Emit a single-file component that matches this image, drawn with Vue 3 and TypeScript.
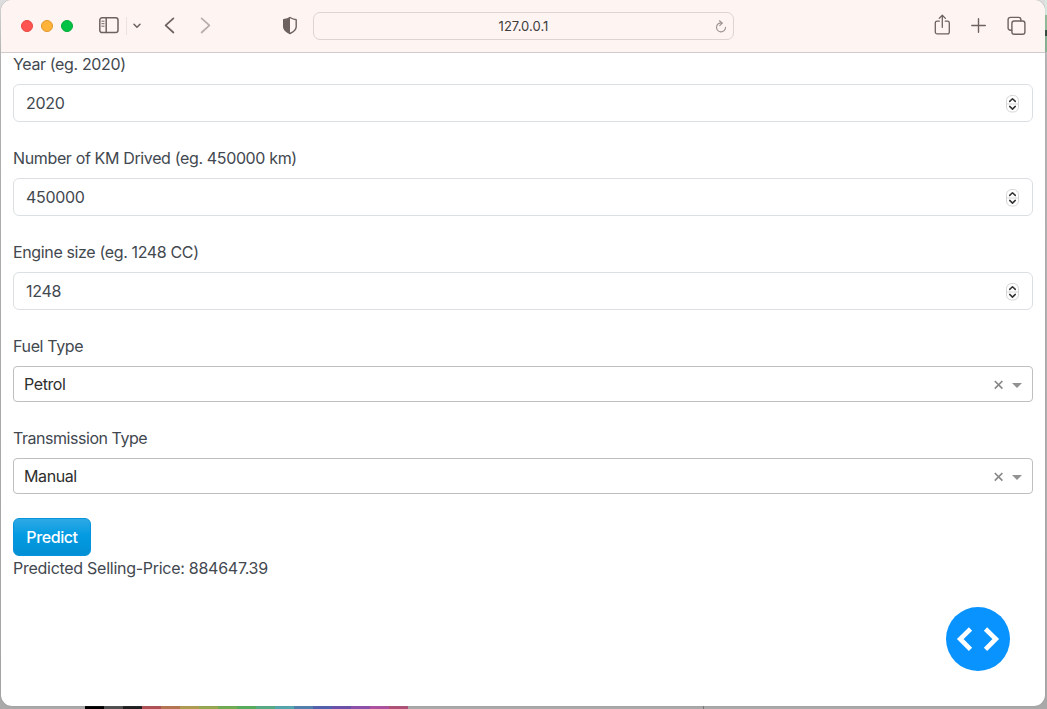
<script setup lang="ts">
import { ref } from 'vue'

interface Field { id: string; label: string; value: string }

const numberFields = ref<Field[]>([
  { id: 'year', label: 'Year (eg. 2020)', value: '2020' },
  { id: 'km', label: 'Number of KM Drived (eg. 450000 km)', value: '450000' },
  { id: 'engine', label: 'Engine size (eg. 1248 CC)', value: '1248' },
])
const selectFields = ref<Field[]>([
  { id: 'fuel', label: 'Fuel Type', value: 'Petrol' },
  { id: 'transmission', label: 'Transmission Type', value: 'Manual' },
])
const price = ref('884647.39')
const swatches: string[] = [
  '#000000', '#505050', '#202020', '#b05055', '#b57550', '#b09c50', '#96a850', '#6fac52', '#55ac5a',
  '#55ac84', '#52a8ae', '#4f80ae', '#5060ac', '#6a50aa', '#8c50aa', '#ae50a0', '#b05078',
]
</script>

<template>
  <div class="desktop">
    <div class="window">
      <header class="toolbar">
        <div class="lights"><i class="red"></i><i class="amber"></i><i class="green"></i></div>
        <svg class="sidebar" width="20" height="17" viewBox="0 0 20 17">
          <rect x=".8" y=".8" width="18.2" height="14.8" rx="2.3" />
          <path d="M7.2 1v14.6" />
          <path class="thin" d="M2.8 4.2h2.3M2.8 6.7h2.3M2.8 9.2h2.3" />
        </svg>
        <span class="divider"></span>
        <svg class="chev" width="8" height="6" viewBox="0 0 8 6"><path d="M1 1.2l3 3 3-3" /></svg>
        <svg class="back" width="11" height="17" viewBox="0 0 11 17"><path d="M9.4 1.3L1.6 8.4l7.8 7.1" /></svg>
        <svg class="forward" width="11" height="17" viewBox="0 0 11 17"><path d="M1.6 1.3l7.8 7.1-7.8 7.1" /></svg>
        <svg class="shield" width="16" height="19" viewBox="0 0 16 19">
          <path d="M8 1.5C6.3 2.8 4 3.3 1.7 3.7v7.1c0 3.2 3.2 5.2 6.3 6.7 3.1-1.5 6.2-3.5 6.2-6.7V3.7C12 3.3 9.7 2.8 8 1.5z" />
          <path class="fill" d="M8 1.5C6.3 2.8 4 3.3 1.7 3.7v7.1c0 3.2 3.2 5.2 6.3 6.7z" />
        </svg>
        <div class="address">
          <span>127.0.0.1</span>
          <svg width="12" height="13" viewBox="0 0 12 13"><path d="M6.7 2.9A4.5 4.5 0 1 0 10.5 7.4M4.4 .8l3 2.3-2.7 2.5" /></svg>
        </div>
        <svg class="share" width="17" height="22" viewBox="0 0 17 22">
          <path d="M5.3 7.2H3.2A1.9 1.9 0 0 0 1.3 9.1v8.9a1.9 1.9 0 0 0 1.9 1.9h10.2a1.9 1.9 0 0 0 1.9-1.9V9.1a1.9 1.9 0 0 0-1.9-1.9h-2.1M8.3 13.3V1.5M5.2 4.4l3.1-3.1 3.1 3.1" />
        </svg>
        <svg class="plus" width="15" height="15" viewBox="0 0 15 15"><path d="M7.5 .8v13.5M.8 7.5h13.5" /></svg>
        <svg class="tabs" width="19" height="20" viewBox="0 0 19 20">
          <path d="M4.7 14.2H3.4A2.3 2.3 0 0 1 1.1 11.9V3.7A2.3 2.3 0 0 1 3.4 1.4h8.2a2.3 2.3 0 0 1 2.3 2.3v1.2" />
          <rect x="4.9" y="5" width="13" height="13.3" rx="2.3" />
        </svg>
      </header>

      <main class="page">
        <div v-for="f in numberFields" :key="f.id" class="field">
          <label :class="f.id">{{ f.label }}</label>
          <div class="number">
            <span>{{ f.value }}</span>
            <svg class="stepper" width="15" height="20" viewBox="0 0 15 20">
              <rect x="1.5" y="2.5" width="12" height="16.500" rx="5" />
              <path class="mid" d="M2 11h11" />
              <path class="arrow" d="M4.700 8.400l2.800-2.700 2.800 2.700M4.700 13.400l2.800 2.700 2.800-2.700" />
            </svg>
          </div>
        </div>
        <div v-for="f in selectFields" :key="f.id" class="field">
          <label :class="f.id">{{ f.label }}</label>
          <div class="select">
            <span>{{ f.value }}</span>
            <svg class="clear" width="10" height="10" viewBox="0 0 10 10"><path d="M.8 1l7.600 7.600M8.400 1L.8 8.600" /></svg>
            <svg class="caret" width="10" height="5" viewBox="0 0 10 5"><path d="M0 0h10L5 5z" /></svg>
          </div>
        </div>
        <button class="predict" type="button">Predict</button>
        <div class="result">Predicted Selling-Price: {{ price }}</div>
      </main>

      <div class="debug">
        <svg width="64" height="64" viewBox="0 0 64 64"><path d="M24.500 22L14.200 32l10.300 10.300M39.500 22l10.300 10-10.300 10.300" /></svg>
      </div>
    </div>
    <div class="strip"><i v-for="c in swatches" :key="c" :style="{ background: c }"></i><b></b></div>
    <div class="behind"></div>
  </div>
</template>

<style>
body { overflow: hidden; }
</style>

<style scoped>
* { box-sizing: border-box; }
.desktop {
  position: relative; width: 1047px; height: 709px; overflow: hidden;
  background: linear-gradient(#dedede 0, #b5b5b5 60px, #a9a9a9 100%);
  font-family: Inter, "Liberation Sans", sans-serif; font-size: 16px; line-height: 24px; color: #42484f;
}
.window {
  position: relative; z-index: 1; width: 1044px; height: 706px; margin-left: 1px;
  border-radius: 11px; background: #fff; overflow: hidden;
  box-shadow: 0 0 1px #777;
}
.toolbar {
  display: flex; align-items: center; height: 53px; padding: 0 0 1px 20px;
  background: #fef4f1; border-bottom: 1px solid #cfcccb;
}
svg { display: block; flex: none; fill: none; stroke: #6e6260; stroke-width: 1.5; stroke-linecap: round; stroke-linejoin: round; }
.lights { display: flex; gap: 8px; }
.lights i { width: 12px; height: 12px; border-radius: 50%; border: 1px solid; }
.lights .red { background: #ff5450; border-color: #e8453f; }
.lights .amber { background: #ffb339; border-color: #df982c; }
.lights .green { background: #00c244; border-color: #00ad38; }
.sidebar { margin-left: 26px; }
.thin { stroke-width: 1; }
.divider { width: 1px; height: 18px; margin-left: 7px; background: #ece2df; }
.chev { margin-left: 6px; }
.back { margin-left: 23px; stroke-width: 1.7; }
.forward { margin-left: 25px; stroke: #b7adab; stroke-width: 1.7; }
.shield { margin-left: 71px; stroke-width: 1.4; }
.shield .fill { fill: #6e6260; stroke: none; }
.address {
  display: flex; flex: none; align-items: center; width: 421px; height: 28px; margin-left: 15px; padding-right: 6px;
  border: 1px solid #dcd5d2; border-radius: 7px; color: #3d3d3d; font-size: 13px;
}
.address span { flex: 1; padding-left: 18px; text-align: center; letter-spacing: 0.05px; }
.address svg { stroke: #9a918f; stroke-width: 1.1; margin-top: 1px; }
.share { margin-left: 200px; stroke-width: 1.3; margin-top: -2px; }
.plus { margin-left: 20px; stroke-width: 1.4; }
.tabs { margin-left: 21px; stroke-width: 1.4; }
.page { margin-top: -1px; padding: 0 12px; }
.field { margin-bottom: 24px; }
.field label { display: block; height: 24px; margin-bottom: 8px; letter-spacing: -0.36px; }
.field .transmission { letter-spacing: -0.46px; }
.number, .select { display: flex; align-items: center; background: #fff; }
.number { height: 38px; padding: 0 12px; border: 1px solid #dbdfe2; border-radius: 6px; }
.number span, .select span { flex: 1; }
.number span { letter-spacing: -0.3px; }
.stepper rect { fill: #fff; stroke: #d5d5d5; stroke-width: 1; }
.stepper .mid { stroke: #d8d8d8; stroke-width: 1; }
.stepper .arrow { stroke: #333; stroke-width: 1.5; }
.select { height: 36px; padding: 0 10px; border: 1px solid #bfbfbf; border-radius: 4px; color: #2e2e2e; letter-spacing: -0.4px; }
.clear { stroke: #888; stroke-width: 1.7; stroke-linecap: butt; margin-top: 1px; }
.caret { margin-left: 8px; margin-top: 2px; fill: #929292; stroke: none; }
.predict {
  display: block; width: 78px; height: 38px; padding: 0; border: 1px solid #0694dc; border-radius: 6px;
  background: linear-gradient(#2fa9e6, #039be2 45%, #038fd3); color: #fff;
  font: 500 16px/24px Inter, "Liberation Sans", sans-serif; letter-spacing: -0.4px;
}
.result { letter-spacing: -0.27px; }
.debug { position: absolute; left: 945px; top: 607px; width: 64px; height: 64px; border-radius: 50%; background: #0893ff; }
.debug svg { stroke: #fff; stroke-width: 4.6; stroke-linecap: butt; stroke-linejoin: miter; }
.strip { display: flex; height: 3px; padding-left: 85px; }
.strip i { width: 19px; flex: none; }
.strip b { width: 296px; border-right: 1px solid #777; }
.behind {
  position: absolute; right: 0; top: 0; width: 2px; height: 52px;
  background: linear-gradient(#d9ebe0 0 15px, #8fbd98 15px 30px, #35483c 30px 36px, #85b290 36px);
}
</style>
